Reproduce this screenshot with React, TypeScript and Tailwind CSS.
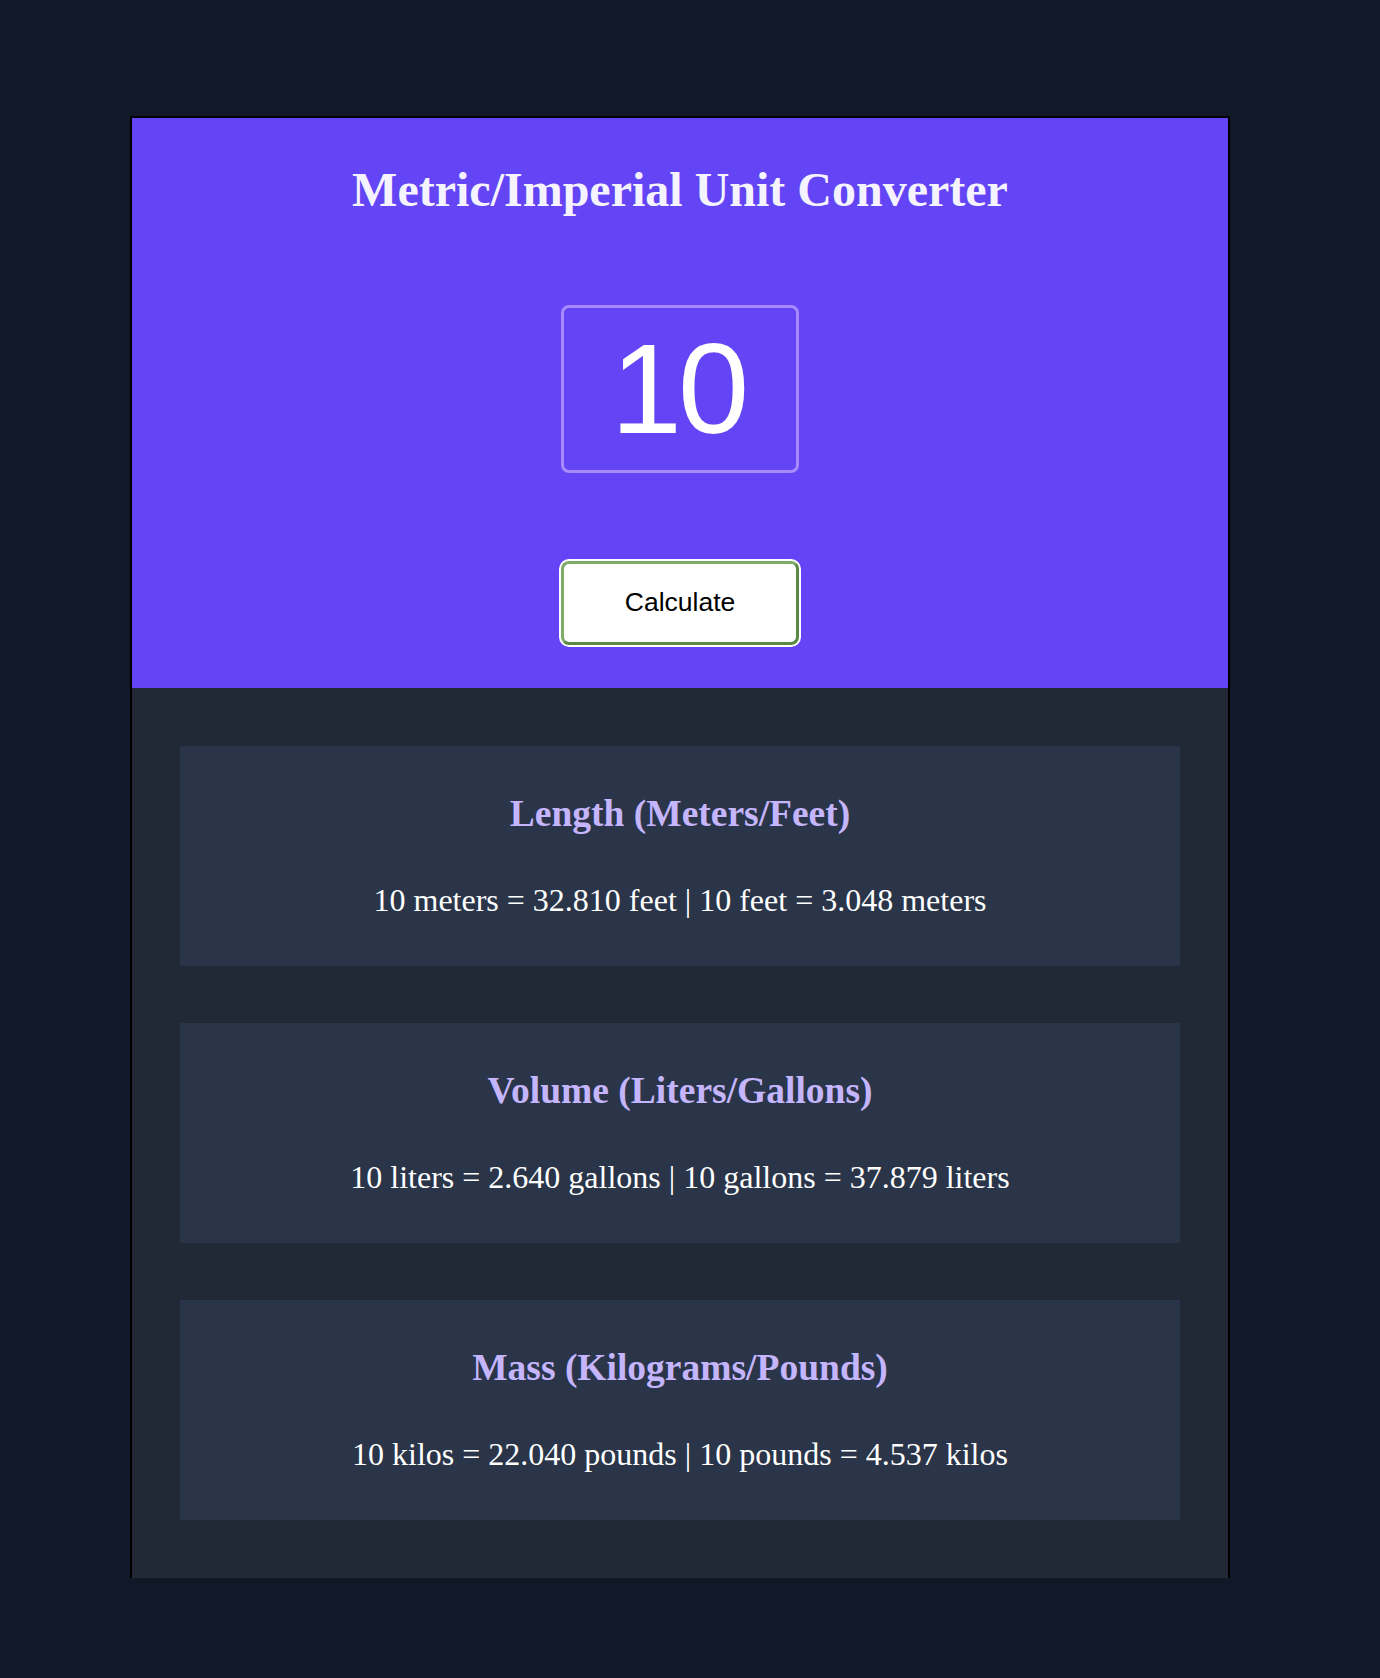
import React from "react";

const cards = [
  { title: "Length (Meters/Feet)", text: "10 meters = 32.810 feet | 10 feet = 3.048 meters" },
  { title: "Volume (Liters/Gallons)", text: "10 liters = 2.640 gallons | 10 gallons = 37.879 liters" },
  { title: "Mass (Kilograms/Pounds)", text: "10 kilos = 22.040 pounds | 10 pounds = 4.537 kilos" },
];

export default function App() {
  return (
    <div className="min-h-[1678px] w-full bg-[#111827] pt-[116px] font-['Liberation_Serif','Times_New_Roman',serif]">
      <div className="ml-[130px] w-[1100px] border-2 border-b-0 border-black">
        <header className="flex h-[570px] flex-col items-center bg-[#6445f5] pt-[44px]">
          <h1 className="text-[48px] font-bold leading-[56px] text-[#f5f3ff]">
            Metric/Imperial Unit Converter
          </h1>
          <input
            type="text"
            defaultValue="10"
            aria-label="Value"
            className="mt-[87px] box-border h-[168px] w-[238px] rounded-lg border-[3px] border-[#a78bfa] bg-transparent py-0 pl-0 pr-[4px] text-center font-['Liberation_Sans',Arial,sans-serif] text-[128px] tracking-[-4px] text-white outline-none"
          />
          <button
            type="button"
            className="mt-[88px] box-border h-[84px] w-[238px] rounded-lg border-[3px] border-t-[#7eaa6a] border-l-[#7eaa6a] border-r-[#5a8945] border-b-[#5a8945] bg-white font-['Liberation_Sans',Arial,sans-serif] text-[26.5px] text-black shadow-[0_0_0_2px_#ffffff]"
          >
            Calculate
          </button>
        </header>
        <section className="flex flex-col gap-[57px] bg-[#212836] px-12 pt-[58px] pb-[58px]">
          {cards.map((c) => (
            <div key={c.title} className="flex h-[220px] flex-col items-center bg-[#2a3549] pt-[46px]">
              <h2 className="text-[37.5px] font-bold leading-[44px] text-[#c4b5fd]">{c.title}</h2>
              <p className="mt-[44px] text-[32px] leading-[40px] text-white">{c.text}</p>
            </div>
          ))}
        </section>
      </div>
    </div>
  );
}
